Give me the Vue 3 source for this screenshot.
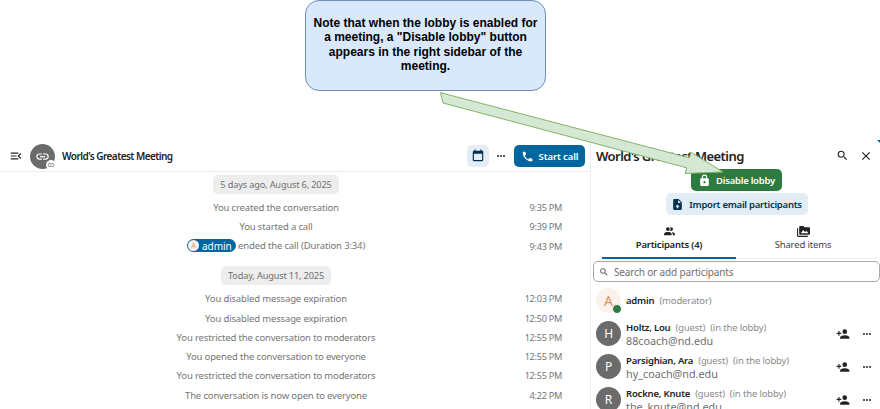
<script setup>
const icons = {
  menu: 'M21,15.61L19.59,17L14.58,12L19.59,7L21,8.39L17.44,12L21,15.61M3,6H16V8H3V6M3,13V11H13V13H3M3,18V16H16V18H3Z',
  link: 'M3.9,12C3.9,10.29 5.29,8.9 7,8.9H11V7H7A5,5 0 0,0 2,12A5,5 0 0,0 7,17H11V15.1H7C5.29,15.1 3.9,13.71 3.9,12M8,13H16V11H8V13M17,7H13V8.9H17C18.71,8.9 20.1,10.29 20.1,12C20.1,13.71 18.71,15.1 17,15.1H13V17H17A5,5 0 0,0 22,12A5,5 0 0,0 17,7Z',
  calendar: 'M19 3H18V1H16V3H8V1H6V3H5C3.9 3 3 3.9 3 5V19C3 20.1 3.9 21 5 21H19C20.1 21 21 20.1 21 19V5C21 3.9 20.1 3 19 3M19 19H5V8H19V19Z',
  dots: 'M16,12A2,2 0 0,1 18,10A2,2 0 0,1 20,12A2,2 0 0,1 18,14A2,2 0 0,1 16,12M10,12A2,2 0 0,1 12,10A2,2 0 0,1 14,12A2,2 0 0,1 12,14A2,2 0 0,1 10,12M4,12A2,2 0 0,1 6,10A2,2 0 0,1 8,12A2,2 0 0,1 6,14A2,2 0 0,1 4,12Z',
  phone: 'M6.62,10.79C8.06,13.62 10.38,15.94 13.21,17.38L15.41,15.18C15.69,14.9 16.08,14.82 16.43,14.93C17.55,15.3 18.75,15.5 20,15.5A1,1 0 0,1 21,16.5V20A1,1 0 0,1 20,21A17,17 0 0,1 3,4A1,1 0 0,1 4,3H7.5A1,1 0 0,1 8.5,4C8.5,5.25 8.7,6.45 9.07,7.57C9.18,7.92 9.1,8.31 8.82,8.59L6.62,10.79Z',
  search: 'M9.5,3A6.5,6.5 0 0,1 16,9.5C16,11.11 15.41,12.59 14.44,13.73L14.71,14H15.5L20.5,19L19,20.5L14,15.5V14.71L13.73,14.44C12.59,15.41 11.11,16 9.5,16A6.5,6.5 0 0,1 3,9.5A6.5,6.5 0 0,1 9.5,3M9.5,5C7,5 5,7 5,9.5C5,12 7,14 9.5,14C12,14 14,12 14,9.5C14,7 12,5 9.5,5Z',
  close: 'M19,6.41L17.59,5L12,10.59L6.41,5L5,6.41L10.59,12L5,17.59L6.41,19L12,13.41L17.59,19L19,17.59L13.41,12L19,6.41Z',
  lock: 'M12,17A2,2 0 0,0 14,15C14,13.89 13.1,13 12,13A2,2 0 0,0 10,15A2,2 0 0,0 12,17M18,8A2,2 0 0,1 20,10V20A2,2 0 0,1 18,22H6A2,2 0 0,1 4,20V10C4,8.89 4.9,8 6,8H7V6A5,5 0 0,1 12,1A5,5 0 0,1 17,6V8H18M12,3A3,3 0 0,0 9,6V8H15V6A3,3 0 0,0 12,3Z',
  file: 'M14,2H6A2,2 0 0,0 4,4V20A2,2 0 0,0 6,22H18A2,2 0 0,0 20,20V8L14,2M13.5,16V19H10.5V16H8L12,12L16,16H13.5M13,9V3.5L18.5,9H13Z',
  people: 'M16 17V19H2V17S2 13 9 13 16 17 16 17M12.5 7.5A3.5 3.5 0 1 0 9 11A3.5 3.5 0 0 0 12.5 7.5M15.94 13A5.32 5.32 0 0 1 18 17V19H22V17S22 13.37 15.94 13M15 4A3.39 3.39 0 0 0 13.07 4.59A5 5 0 0 1 13.07 10.41A3.39 3.39 0 0 0 15 11A3.5 3.5 0 0 0 15 4Z',
  folder: 'M7,15L11.5,9L15,13.5L17.5,10.5L21,15M22,4H14L12,2H6A2,2 0 0,0 4,4V16A2,2 0 0,0 6,18H22A2,2 0 0,0 24,16V6A2,2 0 0,0 22,4M2,6H0V11H0V20A2,2 0 0,0 2,22H20V20H2V6Z',
  addUser: 'M15,14C12.33,14 7,15.33 7,18V20H23V18C23,15.33 17.67,14 15,14M6,10V7H4V10H1V12H4V15H6V12H9V10M15,12A4,4 0 0,0 19,8A4,4 0 0,0 15,4A4,4 0 0,0 11,8A4,4 0 0,0 15,12Z'
}

const firstDay = [
  { text: 'You created the conversation', time: '9:35 PM' },
  { text: 'You started a call', time: '9:39 PM' },
  { text: 'ended the call (Duration 3:34)', time: '9:43 PM', chip: true }
]
const secondDay = [
  { text: 'You disabled message expiration', time: '12:03 PM' },
  { text: 'You disabled message expiration', time: '12:50 PM' },
  { text: 'You restricted the conversation to moderators', time: '12:55 PM' },
  { text: 'You opened the conversation to everyone', time: '12:55 PM' },
  { text: 'You restricted the conversation to moderators', time: '12:55 PM' },
  { text: 'The conversation is now open to everyone', time: '4:22 PM' }
]
const guests = [
  { letter: 'H', name: 'Holtz, Lou', mail: '88coach@nd.edu' },
  { letter: 'P', name: 'Parsighian, Ara', mail: 'hy_coach@nd.edu' },
  { letter: 'R', name: 'Rockne, Knute', mail: 'the_knute@nd.edu' }
]
</script>

<template>
  <div class="page">
    <div class="top-band"></div>
    <main class="app">
      <section class="chat">
        <header class="chat-head">
          <svg class="ic ic-menu" viewBox="0 0 24 24"><path :d="icons.menu" /></svg>
          <div class="conv-avatar">
            <svg class="ic ic-link" viewBox="0 0 24 24"><path :d="icons.link" /></svg>
            <span class="conv-badge"><svg class="ic ic-badge" viewBox="0 0 24 24"><path :d="icons.link" /></svg></span>
          </div>
          <h1 class="conv-title">World's Greatest Meeting</h1>
          <span class="cal-btn"><svg class="ic ic-cal" viewBox="0 0 24 24"><path :d="icons.calendar" /></svg></span>
          <svg class="ic ic-dots-head" viewBox="0 0 24 24"><path :d="icons.dots" /></svg>
          <button class="call-btn">
            <svg class="ic ic-phone" viewBox="0 0 24 24"><path :d="icons.phone" /></svg>
            Start call
          </button>
        </header>
        <div class="log">
          <div class="day"><span class="pill">5 days ago, August 6, 2025</span></div>
          <div v-for="(m, i) in firstDay" :key="'a' + i" class="msg">
            <span class="msg-text">
              <span v-if="m.chip" class="chip"><span class="chip-av">A</span>admin</span>
              {{ m.text }}
            </span>
            <span class="msg-time">{{ m.time }}</span>
          </div>
          <div class="day day-two"><span class="pill">Today, August 11, 2025</span></div>
          <div v-for="(m, i) in secondDay" :key="'b' + i" class="msg">
            <span class="msg-text">{{ m.text }}</span>
            <span class="msg-time">{{ m.time }}</span>
          </div>
        </div>
      </section>

      <aside class="side">
        <header class="side-head">
          <h2 class="side-title">World's Greatest Meeting</h2>
          <svg class="ic ic-search" viewBox="0 0 24 24"><path :d="icons.search" /></svg>
          <svg class="ic ic-close" viewBox="0 0 24 24"><path :d="icons.close" /></svg>
        </header>
        <div class="actions">
          <button class="btn-green">
            <svg class="ic ic-btn" viewBox="0 0 24 24"><path :d="icons.lock" /></svg>
            Disable lobby
          </button>
          <button class="btn-soft">
            <svg class="ic ic-btn" viewBox="0 0 24 24"><path :d="icons.file" /></svg>
            Import email participants
          </button>
        </div>
        <nav class="tabs">
          <div class="tab tab-on">
            <svg class="ic ic-tab" viewBox="0 0 24 24"><path :d="icons.people" /></svg>
            <span>Participants (4)</span>
          </div>
          <div class="tab">
            <svg class="ic ic-tab" viewBox="0 0 24 24"><path :d="icons.folder" /></svg>
            <span>Shared items</span>
          </div>
        </nav>
        <div class="searchbox">
          <svg class="ic ic-find" viewBox="0 0 24 24"><path :d="icons.search" /></svg>
          <span>Search or add participants</span>
        </div>
        <div class="person person-admin">
          <div class="av av-admin">A<span class="online"></span></div>
          <div class="who">
            <div class="line"><b>admin</b><span class="role">(moderator)</span></div>
          </div>
        </div>
        <div v-for="g in guests" :key="g.name" class="person">
          <div class="av">{{ g.letter }}</div>
          <div class="who">
            <div class="line"><b>{{ g.name }}</b><span class="role">(guest)</span><span class="role">(in the lobby)</span></div>
            <div class="mail">{{ g.mail }}</div>
          </div>
          <svg class="ic ic-add" viewBox="0 0 24 24"><path :d="icons.addUser" /></svg>
          <svg class="ic ic-more" viewBox="0 0 24 24"><path :d="icons.dots" /></svg>
        </div>
      </aside>
    </main>

    <div class="callout">Note that when the lobby is enabled for a meeting, a "Disable lobby" button appears in the right sidebar of the meeting.</div>
    <svg class="arrow" viewBox="0 0 880 409">
      <polygon points="440.5,92.7 689.3,157.8 690.8,152.2 723,172 685.2,173.4 686.7,167.8 443,103" />
    </svg>
    <span class="speck"></span>
  </div>
</template>

<style>
html, body { margin: 0; background: #fff; }
</style>

<style scoped>
.page {
  position: relative;
  width: 880px;
  height: 409px;
  overflow: hidden;
  background: #fff;
  font-family: "Noto Sans", "Open Sans", sans-serif;
  font-size: 9.5px;
  letter-spacing: -0.15px;
  color: #222;
}
.top-band { height: 142px; }
.app { display: flex; height: 267px; }
.ic { display: block; fill: currentColor; flex: none; }
h1, h2 { margin: 0; }
button { font-family: inherit; border: 0; padding: 0; letter-spacing: inherit; }

.chat { width: 590px; border-right: 1px solid #ededed; flex: none; }
.chat-head {
  height: 30px;
  box-sizing: border-box;
  display: flex;
  align-items: center;
  border-bottom: 1px solid #ededed;
  padding: 0 5px 1px 9px;
}
.ic-menu { width: 14px; height: 14px; margin-right: 7px; color: #222; }
.conv-avatar {
  position: relative;
  width: 25px; height: 25px;
  border-radius: 50%;
  background: #6b6b6b;
  color: #fff;
  display: flex; align-items: center; justify-content: center;
  flex: none;
}
.ic-link { width: 15px; height: 15px; }
.conv-badge {
  position: absolute; right: -1px; bottom: -1px;
  width: 10px; height: 10px; border-radius: 50%;
  background: #fff; color: #666;
  display: flex; align-items: center; justify-content: center;
}
.ic-badge { width: 8px; height: 8px; }
.conv-title { font-size: 10px; letter-spacing: -0.55px; font-weight: 600; margin-left: 7px; flex: 1; color: #222; }
.cal-btn {
  width: 22px; height: 22px; border-radius: 5px;
  background: #e3edf5; color: #00324f;
  display: flex; align-items: center; justify-content: center;
}
.ic-cal { width: 14px; height: 14px; }
.ic-dots-head { width: 12px; height: 12px; margin: 0 7px 0 6px; color: #222; }
.call-btn {
  width: 71px; height: 22px; border-radius: 5px;
  background: #00679e; color: #fff;
  font-size: 9.5px; letter-spacing: -0.1px; font-weight: 600;
  display: flex; align-items: center; justify-content: center; gap: 5px;
}
.ic-phone { width: 13px; height: 13px; }

.log { padding-top: 3px; color: #757575; }
.day {
  padding: 0 28px 0 40px; margin-right: 50px;
  display: flex; justify-content: center; margin-bottom: 3.8px;
}
.day-two { margin-top: 10.6px; }
.pill {
  height: 19px; padding: 0 7px; border-radius: 5px;
  background: #ededed; color: #707070; font-size: 9.2px;
  display: flex; align-items: center; white-space: nowrap;
}
.msg {
  display: grid; grid-template-columns: 1fr 50px;
  padding: 0 28px 0 40px;
  height: 19.3px; align-items: center;
  white-space: nowrap;
}
.msg-text { text-align: center; }
.msg-time { text-align: right; font-size: 9.2px; letter-spacing: -0.3px; }
.chip {
  display: inline-flex; align-items: center;
  height: 13px; padding: 0 4px 0 1px; border-radius: 7px;
  background: #00679e; color: #fff; vertical-align: middle;
  position: relative; top: -1px; font-size: 10px; letter-spacing: 0;
}
.chip-av {
  width: 11px; height: 11px; border-radius: 50%;
  background: #fbf2ec; color: #d8975f; font-size: 7px;
  display: flex; align-items: center; justify-content: center; margin-right: 3px;
}

.side { flex: 1; min-width: 0; }
.side-head {
  height: 27px; display: flex; align-items: center;
  padding: 0 7px 0 5px;
}
.side-title { font-size: 13px; letter-spacing: -0.55px; font-weight: 600; flex: 1; color: #222; white-space: nowrap; }
.ic-search { width: 13px; height: 13px; margin-right: 10px; color: #222; }
.ic-close { width: 14px; height: 14px; color: #222; }
.actions {
  display: flex; flex-direction: column; align-items: center; gap: 2px;
  margin-left: 2px;
}
.btn-green, .btn-soft {
  height: 22px; border-radius: 5px; font-size: 9.5px; letter-spacing: -0.25px; font-weight: 600;
  display: flex; align-items: center; justify-content: center; gap: 5px;
  white-space: nowrap;
}
.btn-green { width: 91px; background: #2d7b41; color: #fff; }
.btn-soft { width: 142px; background: #e3edf5; color: #00324f; }
.ic-btn { width: 13px; height: 13px; }
.tabs {
  display: flex; margin: 10px 3px 0 11px;
  border-bottom: 1px solid #ededed;
  height: 33px;
}
.tab {
  width: 134px; display: flex; flex-direction: column; align-items: center;
  color: #444; box-sizing: border-box;
}
.tab-on { font-weight: 600; letter-spacing: -0.2px; color: #222; border-bottom: 2px solid #00679e; height: 34px; }
.ic-tab { width: 13px; height: 13px; color: #222; }
.searchbox {
  margin: 2px 0 0 2px;
  height: 21px; box-sizing: border-box;
  border: 1px solid #a9a9a9; border-radius: 5px;
  display: flex; align-items: center; gap: 5px; padding-left: 5px;
  color: #707070; font-size: 10px;
}
.ic-find { width: 10px; height: 10px; color: #555; }
.person {
  height: 33px; display: flex; align-items: center;
  padding-left: 5px;
}
.person-admin { margin-top: 2px; }
.av {
  position: relative;
  width: 25px; height: 25px; border-radius: 50%;
  background: #6b6b6b; color: #fff; font-size: 12px;
  display: flex; align-items: center; justify-content: center; flex: none;
}
.av-admin { background: #fbf2ec; color: #d8975f; font-size: 14px; }
.online {
  position: absolute; right: -1px; bottom: -1px;
  width: 8px; height: 8px; border-radius: 50%;
  background: #2d7b41; border: 1px solid #fff;
}
.who { margin-left: 5px; flex: 1; min-width: 0; line-height: 13px; }
.line { white-space: nowrap; display: flex; gap: 5px; color: #222; }
.line b { font-weight: 600; letter-spacing: -0.2px; }
.role { color: #8a8a8a; }
.mail { color: #6f6f6f; font-size: 10.8px; letter-spacing: 0; }
.ic-add { width: 14px; height: 14px; color: #222; margin-right: 11px; }
.ic-more { width: 12px; height: 12px; color: #222; margin-right: 7px; }

.callout {
  position: absolute; left: 305px; top: 0;
  width: 241px; height: 91px; box-sizing: border-box;
  padding: 0 6px 2px; margin: 0;
  background: #dae8fc; border: 1px solid #6c8ebf; border-radius: 14px;
  display: flex; align-items: center; justify-content: center; text-align: center;
  font-family: "Liberation Sans", Arial, sans-serif;
  font-size: 12px; font-weight: 700; line-height: 14.5px; letter-spacing: 0; color: #000;
}
.arrow { position: absolute; inset: 0; width: 880px; height: 409px; }
.arrow polygon { fill: #d5e8d4; stroke: #82b366; stroke-width: 1; }
.speck {
  position: absolute; right: 0; top: 140px;
  width: 3px; height: 3px; background: #00679e;
  clip-path: polygon(0 0, 100% 0, 100% 100%);
}
</style>
